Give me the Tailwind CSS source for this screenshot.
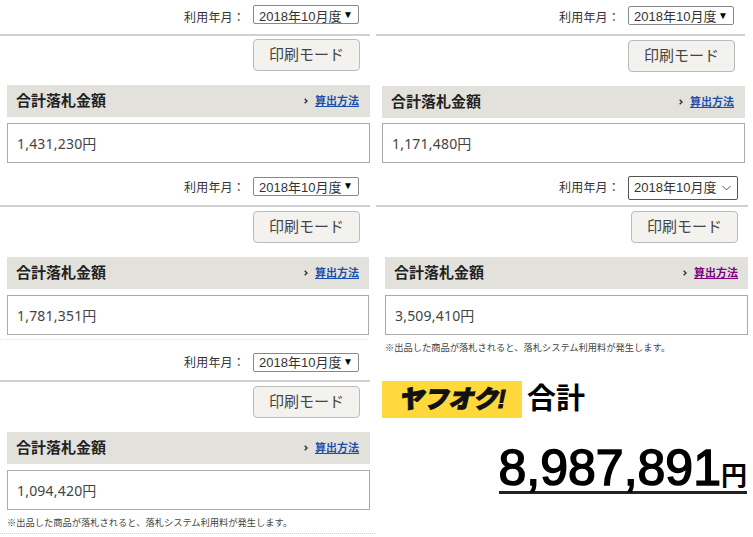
<!DOCTYPE html>
<html lang="ja">
<head>
    <meta charset="UTF-8">
    <title>ヤフオク! 合計</title>
    <script src="https://cdn.jsdelivr.net/npm/@tailwindcss/browser@4"></script>
</head>
<body class="bg-white w-[753px] h-[537px] overflow-hidden font-['Liberation_Sans','Noto_Sans_CJK_JP',sans-serif] text-[#333]">
<div class="flex items-start">

    <!-- left column -->
    <div class="w-[376px] shrink-0">
        <!-- panel 1 -->
        <div class="flex items-center justify-end h-[34px] pt-[1px] pr-[17px]">
            <span class="text-[12px] mr-[8px] tracking-[.2px]">利用年月：</span>
            <div class="flex items-center justify-between w-[106px] h-[19px] mb-[6px] pt-[4px] px-[5px] border border-[#888] rounded-[2px] text-[13px]">2018年10月度<span class="text-[10px] text-black -mt-[5px]">▼</span></div>
        </div>
        <div class="h-[2px] w-[370px] bg-[#d0d0d0]"></div>
        <div class="flex justify-end pr-[16px] mt-[3px]">
            <button class="w-[107px] h-[32px] bg-[#f3f2ee] border border-[#bbb] rounded-[4px] text-[15px] text-[#444]">印刷モード</button>
        </div>
        <div class="flex items-center justify-between ml-[7px] w-[363px] h-[32px] mt-[14px] pl-[9px] pr-[11px] bg-[#e2e1dc]">
            <span class="text-[15px] font-bold text-[#222]">合計落札金額</span>
            <span class="flex items-center gap-[7px] text-[11px] font-bold"><svg class="w-[4px] h-[6px]" viewBox="0 0 4 6" fill="none" stroke="#333" stroke-width="1.4"><path d="M.7.7L3 3 .7 5.3"/></svg><a class="text-[#1d4fae] underline">算出方法</a></span>
        </div>
        <div class="flex items-center ml-[7px] w-[363px] h-[40px] mt-[6px] pl-[9px] border border-[#aaa] font-['Noto_Sans','Noto_Sans_CJK_JP',sans-serif] text-[14px] tracking-[.2px] text-[#444]">1,431,230円</div>

        <!-- panel 2 -->
        <div class="flex items-center justify-end h-[34px] mt-[8px] pr-[17px]">
            <span class="text-[12px] mr-[8px] tracking-[.2px]">利用年月：</span>
            <div class="flex items-center justify-between w-[106px] h-[19px] mb-[4px] pt-[3px] px-[5px] border border-[#888] rounded-[2px] text-[13px]">2018年10月度<span class="text-[10px] text-black -mt-[4px]">▼</span></div>
        </div>
        <div class="h-[2px] w-[370px] bg-[#d0d0d0]"></div>
        <div class="flex justify-end pr-[16px] mt-[4px]">
            <button class="w-[107px] h-[32px] bg-[#f3f2ee] border border-[#bbb] rounded-[4px] text-[15px] text-[#444]">印刷モード</button>
        </div>
        <div class="flex items-center justify-between ml-[7px] w-[362px] h-[32px] mt-[14px] pl-[9px] pr-[10px] bg-[#e2e1dc]">
            <span class="text-[15px] font-bold text-[#222]">合計落札金額</span>
            <span class="flex items-center gap-[7px] text-[11px] font-bold"><svg class="w-[4px] h-[6px]" viewBox="0 0 4 6" fill="none" stroke="#333" stroke-width="1.4"><path d="M.7.7L3 3 .7 5.3"/></svg><a class="text-[#1d4fae] underline">算出方法</a></span>
        </div>
        <div class="flex items-center ml-[7px] w-[362px] h-[40px] mt-[6px] pl-[9px] border border-[#aaa] font-['Noto_Sans','Noto_Sans_CJK_JP',sans-serif] text-[14px] tracking-[.2px] text-[#444]">1,781,351円</div>
        <div class="w-[368px] mt-[4px] border-t border-dotted border-[#e4e4e4]"></div>

        <!-- panel 3 -->
        <div class="flex items-center justify-end h-[40px] pt-[6px] pr-[17px]">
            <span class="text-[12px] mr-[8px] tracking-[.2px]">利用年月：</span>
            <div class="flex items-center justify-between w-[106px] h-[19px] mb-[1px] px-[5px] border border-[#888] rounded-[2px] text-[13px]">2018年10月度<span class="text-[10px] text-black -mt-[2px]">▼</span></div>
        </div>
        <div class="h-[2px] w-[370px] bg-[#d0d0d0]"></div>
        <div class="flex justify-end pr-[16px] mt-[4px]">
            <button class="w-[107px] h-[32px] bg-[#f3f2ee] border border-[#bbb] rounded-[4px] text-[15px] text-[#444]">印刷モード</button>
        </div>
        <div class="flex items-center justify-between ml-[7px] w-[363px] h-[32px] mt-[14px] pl-[9px] pr-[11px] bg-[#e2e1dc]">
            <span class="text-[15px] font-bold text-[#222]">合計落札金額</span>
            <span class="flex items-center gap-[7px] text-[11px] font-bold"><svg class="w-[4px] h-[6px]" viewBox="0 0 4 6" fill="none" stroke="#333" stroke-width="1.4"><path d="M.7.7L3 3 .7 5.3"/></svg><a class="text-[#1d4fae] underline">算出方法</a></span>
        </div>
        <div class="flex items-center ml-[7px] w-[363px] h-[40px] mt-[6px] pl-[9px] border border-[#aaa] font-['Noto_Sans','Noto_Sans_CJK_JP',sans-serif] text-[14px] tracking-[.2px] text-[#444]">1,094,420円</div>
        <p class="ml-[7px] mt-[6px] text-[9.25px] leading-[14px] text-[#444]">※出品した商品が落札されると、落札システム利用料が発生します。</p>
        <div class="w-[375px] mt-[3px] border-t border-dotted border-[#ccc]"></div>
    </div>

    <!-- right column -->
    <div class="w-[377px] shrink-0">
        <!-- panel 4 -->
        <div class="flex items-center justify-end h-[34px] pt-[2px] pr-[19px]">
            <span class="text-[12px] mr-[8px] tracking-[.2px]">利用年月：</span>
            <div class="flex items-center justify-between w-[106px] h-[19px] mb-[5px] pt-[3px] px-[5px] border border-[#888] rounded-[2px] text-[13px]">2018年10月度<span class="text-[10px] text-black -mt-[4px]">▼</span></div>
        </div>
        <div class="h-[2px] w-[369px] bg-[#d0d0d0]"></div>
        <div class="flex justify-end pr-[18px] mt-[4px]">
            <button class="w-[107px] h-[32px] bg-[#f3f2ee] border border-[#bbb] rounded-[4px] text-[15px] text-[#444]">印刷モード</button>
        </div>
        <div class="flex items-center justify-between ml-[6px] w-[363px] h-[32px] mt-[14px] pl-[9px] pr-[11px] bg-[#e2e1dc]">
            <span class="text-[15px] font-bold text-[#222]">合計落札金額</span>
            <span class="flex items-center gap-[7px] text-[11px] font-bold"><svg class="w-[4px] h-[6px]" viewBox="0 0 4 6" fill="none" stroke="#333" stroke-width="1.4"><path d="M.7.7L3 3 .7 5.3"/></svg><a class="text-[#1d4fae] underline">算出方法</a></span>
        </div>
        <div class="flex items-center ml-[6px] w-[363px] h-[40px] mt-[5px] pl-[9px] border border-[#aaa] font-['Noto_Sans','Noto_Sans_CJK_JP',sans-serif] text-[14px] tracking-[.2px] text-[#444]">1,171,480円</div>

        <!-- panel 5, native-looking select -->
        <div class="flex items-center justify-end h-[34px] mt-[8px] pr-[15px]">
            <span class="text-[12px] mr-[8px] tracking-[.2px]">利用年月：</span>
            <div class="flex items-center justify-between w-[110px] h-[24px] pl-[5px] pr-[6px] border border-[#555] rounded-[2px] text-[13px]">2018年10月度
                <svg class="w-[9px] h-[6px]" viewBox="0 0 9 6" fill="none" stroke="#555" stroke-width="1"><path d="M.5 1l4 4 4-4"/></svg>
            </div>
        </div>
        <div class="h-[2px] w-[372px] bg-[#d0d0d0]"></div>
        <div class="flex justify-end pr-[15px] mt-[4px]">
            <button class="w-[107px] h-[32px] bg-[#f3f2ee] border border-[#bbb] rounded-[4px] text-[15px] text-[#444]">印刷モード</button>
        </div>
        <div class="flex items-center justify-between ml-[9px] w-[363px] h-[32px] mt-[14px] pl-[9px] pr-[10px] bg-[#e2e1dc]">
            <span class="text-[15px] font-bold text-[#222]">合計落札金額</span>
            <span class="flex items-center gap-[7px] text-[11px] font-bold"><svg class="w-[4px] h-[6px]" viewBox="0 0 4 6" fill="none" stroke="#333" stroke-width="1.4"><path d="M.7.7L3 3 .7 5.3"/></svg><a class="text-[#800080] underline">算出方法</a></span>
        </div>
        <div class="flex items-center ml-[9px] w-[363px] h-[40px] mt-[6px] pl-[9px] border border-[#aaa] font-['Noto_Sans','Noto_Sans_CJK_JP',sans-serif] text-[14px] tracking-[.2px] text-[#444]">3,509,410円</div>
        <p class="ml-[9px] mt-[6px] text-[9.25px] leading-[14px] text-[#444]">※出品した商品が落札されると、落札システム利用料が発生します。</p>

        <!-- total -->
        <div class="flex items-center ml-[6px] mt-[26px]">
            <div class="flex items-center justify-center w-[140px] h-[37px] bg-[#ffd93b] text-[25px] leading-none font-black italic text-[#111] [-webkit-text-stroke:1px_#111]">ヤフオク!</div>
            <span class="ml-[5px] text-[29px] leading-none font-bold text-black">合計</span>
        </div>
        <div class="flex justify-end pr-[6px] mt-[35px]">
            <span class="font-normal text-black text-[50px] leading-[30px] border-b-[3px] border-[#222] [-webkit-text-stroke:1.5px_#000]">8,987,891<span class="text-[26px] font-bold [-webkit-text-stroke:0]">円</span></span>
        </div>
    </div>
</div>
</body>
</html>
